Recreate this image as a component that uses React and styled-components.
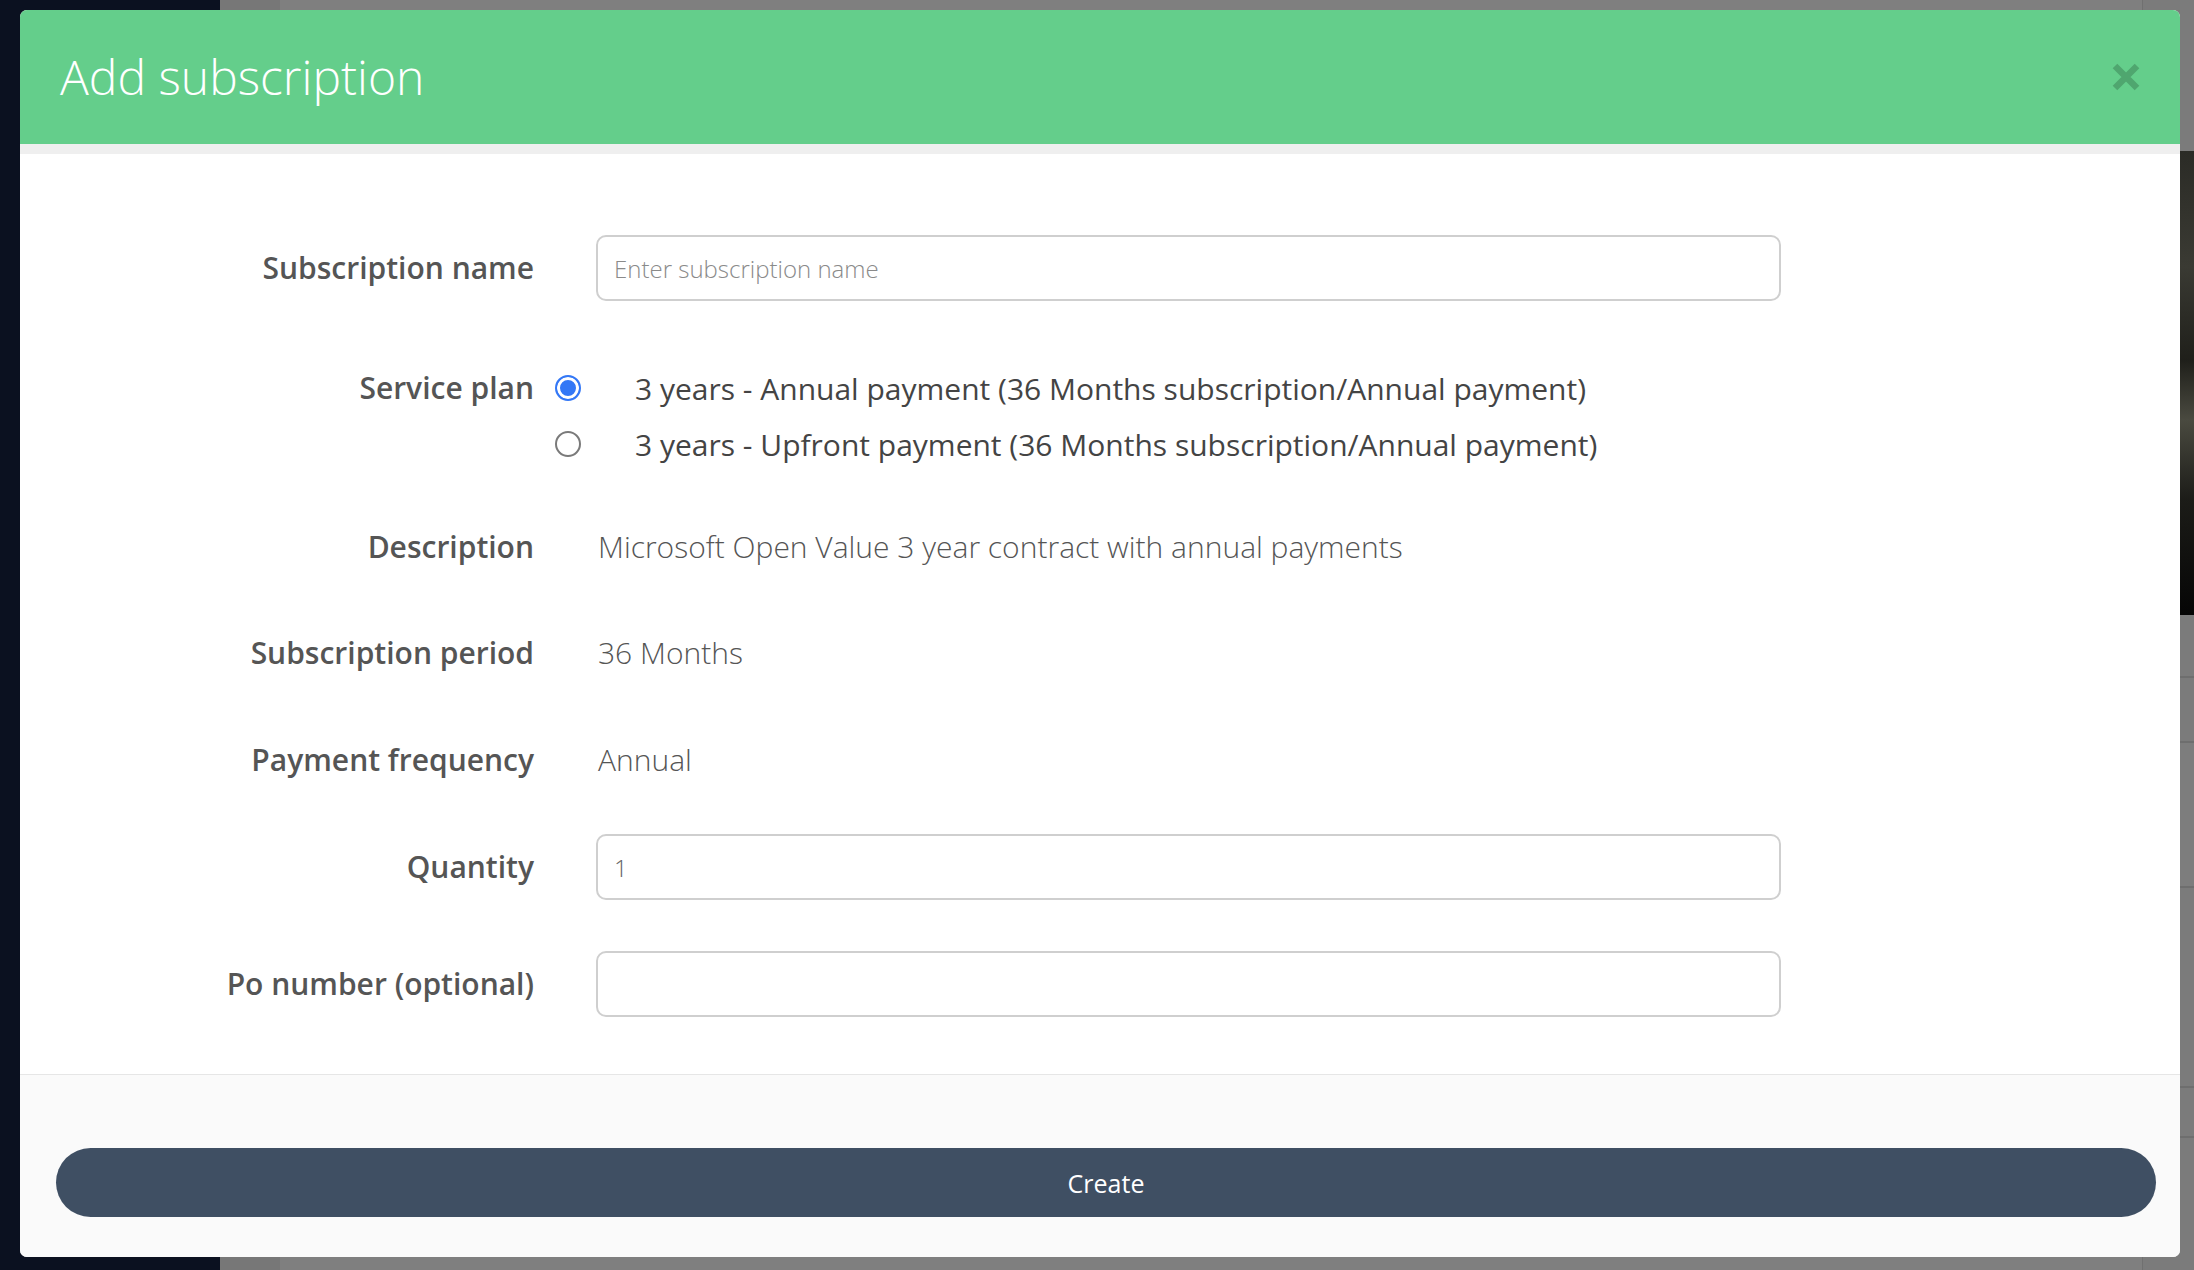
import React from "react";
import styled, { createGlobalStyle } from "styled-components";

const GlobalStyle = createGlobalStyle`
  html, body {
    margin: 0;
    padding: 0;
    width: 100%;
    height: 100%;
    overflow: hidden;
  }
  body {
    font-family: "Open Sans", "Noto Sans", sans-serif;
  }
  * { box-sizing: border-box; }
`;

const Screen = styled.div`
  position: relative;
  display: flex;
  width: 2194px;
  height: 1270px;
  background: #7b7b7b;
`;

const Sidebar = styled.div`
  width: 220px;
  flex: none;
  background: #0b1120;
`;

const MainArea = styled.div`
  flex: 1;
  display: flex;
  background: #808080;
`;

const MainStrip = styled.div`
  width: 60px;
  flex: none;
  background: #777777;
`;

const MainContent = styled.div`
  flex: 1;
  background: #7f7f7f;
`;

const RightCol = styled.div`
  width: 52px;
  flex: none;
  display: flex;
  flex-direction: column;
  border-left: 1px solid #707070;
  background: #7b7b7b;
`;

const RightTop = styled.div`
  height: 151px;
  background: #7b7b7b;
`;

const RightImage = styled.div`
  height: 464px;
  background: linear-gradient(180deg, #2b2b26 0%, #3a3a33 25%, #1f1f1a 45%, #4a4a40 58%, #1c1c18 75%, #050505 100%);
`;

const RightRow = styled.div`
  height: ${(p) => p.$h}px;
  border-bottom: 2px solid #6e6e6e;
  background: ${(p) => p.$bg || "#7b7b7b"};
`;

const Modal = styled.div`
  position: absolute;
  top: 10px;
  left: 20px;
  width: 2160px;
  background: #ffffff;
  border-radius: 7px;
  overflow: hidden;
  display: flex;
  flex-direction: column;
`;

const Header = styled.div`
  height: 144px;
  background: #64ce8b;
  border-bottom: 10px solid #efefef;
  display: flex;
  align-items: center;
  justify-content: space-between;
  padding: 0 40px 0 40px;
`;

const Title = styled.h1`
  margin: 0;
  font-family: "Open Sans", sans-serif;
  font-weight: 300;
  font-size: 48px;
  color: #ffffff;
  line-height: 1;
`;

const CloseButton = styled.button`
  width: 28px;
  height: 28px;
  padding: 0;
  border: none;
  background: none;
  display: flex;
  align-items: center;
  justify-content: center;
  cursor: pointer;
`;

const Body = styled.div`
  padding: 81px 0 57px;
  display: flex;
  flex-direction: column;
`;

const Row = styled.div`
  display: grid;
  grid-template-columns: 514px 1247px;
  align-items: ${(p) => (p.$top ? "start" : "center")};
  margin-top: ${(p) => p.$mt || 0}px;
`;

const Label = styled.label`
  text-align: right;
  font-family: "Open Sans", sans-serif;
  font-weight: 600;
  font-size: 30px;
  color: #555555;
  line-height: ${(p) => p.$lh || 66}px;
  white-space: nowrap;
`;

const Control = styled.div`
  padding-left: 62px;
`;

const TextInput = styled.input`
  display: block;
  width: 1185px;
  height: 66px;
  border: 2px solid #cfcfcf;
  border-radius: 10px;
  padding: 0 16px;
  font-family: "Open Sans", sans-serif;
  font-weight: 300;
  font-size: 24px;
  color: #666666;
  background: #ffffff;
  outline: none;
  &::placeholder {
    color: #8a8a8a;
    font-weight: 300;
  }
`;

const StaticValue = styled.div`
  padding-left: 2px;
  font-family: "Open Sans", sans-serif;
  font-weight: 300;
  font-size: 30px;
  line-height: 66px;
  color: #555555;
  white-space: nowrap;
`;

const RadioGroup = styled.div`
  margin-left: -41px;
  display: flex;
  flex-direction: column;
`;

const RadioOption = styled.label`
  height: 56px;
  display: flex;
  align-items: center;
  gap: 54px;
  font-family: "Open Sans", sans-serif;
  font-weight: 400;
  font-size: 30px;
  color: #444444;
  white-space: nowrap;
  cursor: pointer;
`;

const RadioDot = styled.span`
  width: 26px;
  height: 26px;
  flex: none;
  border-radius: 50%;
  border: 2px solid ${(p) => (p.$checked ? "#3478f6" : "#7a7a7a")};
  background: ${(p) => (p.$checked ? "#3478f6" : "#ffffff")};
  box-shadow: ${(p) => (p.$checked ? "inset 0 0 0 3px #ffffff" : "none")};
`;

const Footer = styled.div`
  border-top: 1px solid #e6e6e6;
  background: #fafafa;
  padding: 73px 24px 40px 36px;
`;

const PrimaryButton = styled.button`
  width: 100%;
  height: 69px;
  border: none;
  border-radius: 35px;
  background: #3f4f63;
  color: #ffffff;
  font-family: "Open Sans", sans-serif;
  font-weight: 400;
  font-size: 25px;
  cursor: pointer;
`;

const plans = [
  "3 years - Annual payment (36 Months subscription/Annual payment)",
  "3 years - Upfront payment (36 Months subscription/Annual payment)",
];

export default function App() {
  const [plan, setPlan] = React.useState(0);
  return (
    <>
      <GlobalStyle />
      <Screen>
        <Sidebar />
        <MainArea>
          <MainStrip />
          <MainContent />
          <RightCol>
            <RightTop />
            <RightImage />
            <RightRow $h={63} />
            <RightRow $h={65} />
            <RightRow $h={145} $bg="#7d7d7d" />
            <RightRow $h={200} />
            <RightRow $h={50} />
          </RightCol>
        </MainArea>

        <Modal>
          <Header>
            <Title>Add subscription</Title>
            <CloseButton aria-label="Close">
              <svg width="28" height="28" viewBox="0 0 28 28">
                <path
                  d="M3 3 L25 25 M25 3 L3 25"
                  stroke="#4fa66f"
                  strokeWidth="6.5"
                  strokeLinecap="butt"
                  fill="none"
                />
              </svg>
            </CloseButton>
          </Header>

          <Body>
            <Row>
              <Label>Subscription name</Label>
              <Control>
                <TextInput placeholder="Enter subscription name" />
              </Control>
            </Row>

            <Row $top $mt={59}>
              <Label $lh={56}>Service plan</Label>
              <Control>
                <RadioGroup>
                  {plans.map((p, i) => (
                    <RadioOption key={p} onClick={() => setPlan(i)}>
                      <RadioDot $checked={plan === i} />
                      {p}
                    </RadioOption>
                  ))}
                </RadioGroup>
              </Control>
            </Row>

            <Row $mt={42}>
              <Label>Description</Label>
              <Control>
                <StaticValue>Microsoft Open Value 3 year contract with annual payments</StaticValue>
              </Control>
            </Row>

            <Row $mt={40}>
              <Label>Subscription period</Label>
              <Control>
                <StaticValue>36 Months</StaticValue>
              </Control>
            </Row>

            <Row $mt={41}>
              <Label>Payment frequency</Label>
              <Control>
                <StaticValue>Annual</StaticValue>
              </Control>
            </Row>

            <Row $mt={41}>
              <Label>Quantity</Label>
              <Control>
                <TextInput defaultValue="1" />
              </Control>
            </Row>

            <Row $mt={51}>
              <Label>Po number (optional)</Label>
              <Control>
                <TextInput />
              </Control>
            </Row>
          </Body>

          <Footer>
            <PrimaryButton>Create</PrimaryButton>
          </Footer>
        </Modal>
      </Screen>
    </>
  );
}
